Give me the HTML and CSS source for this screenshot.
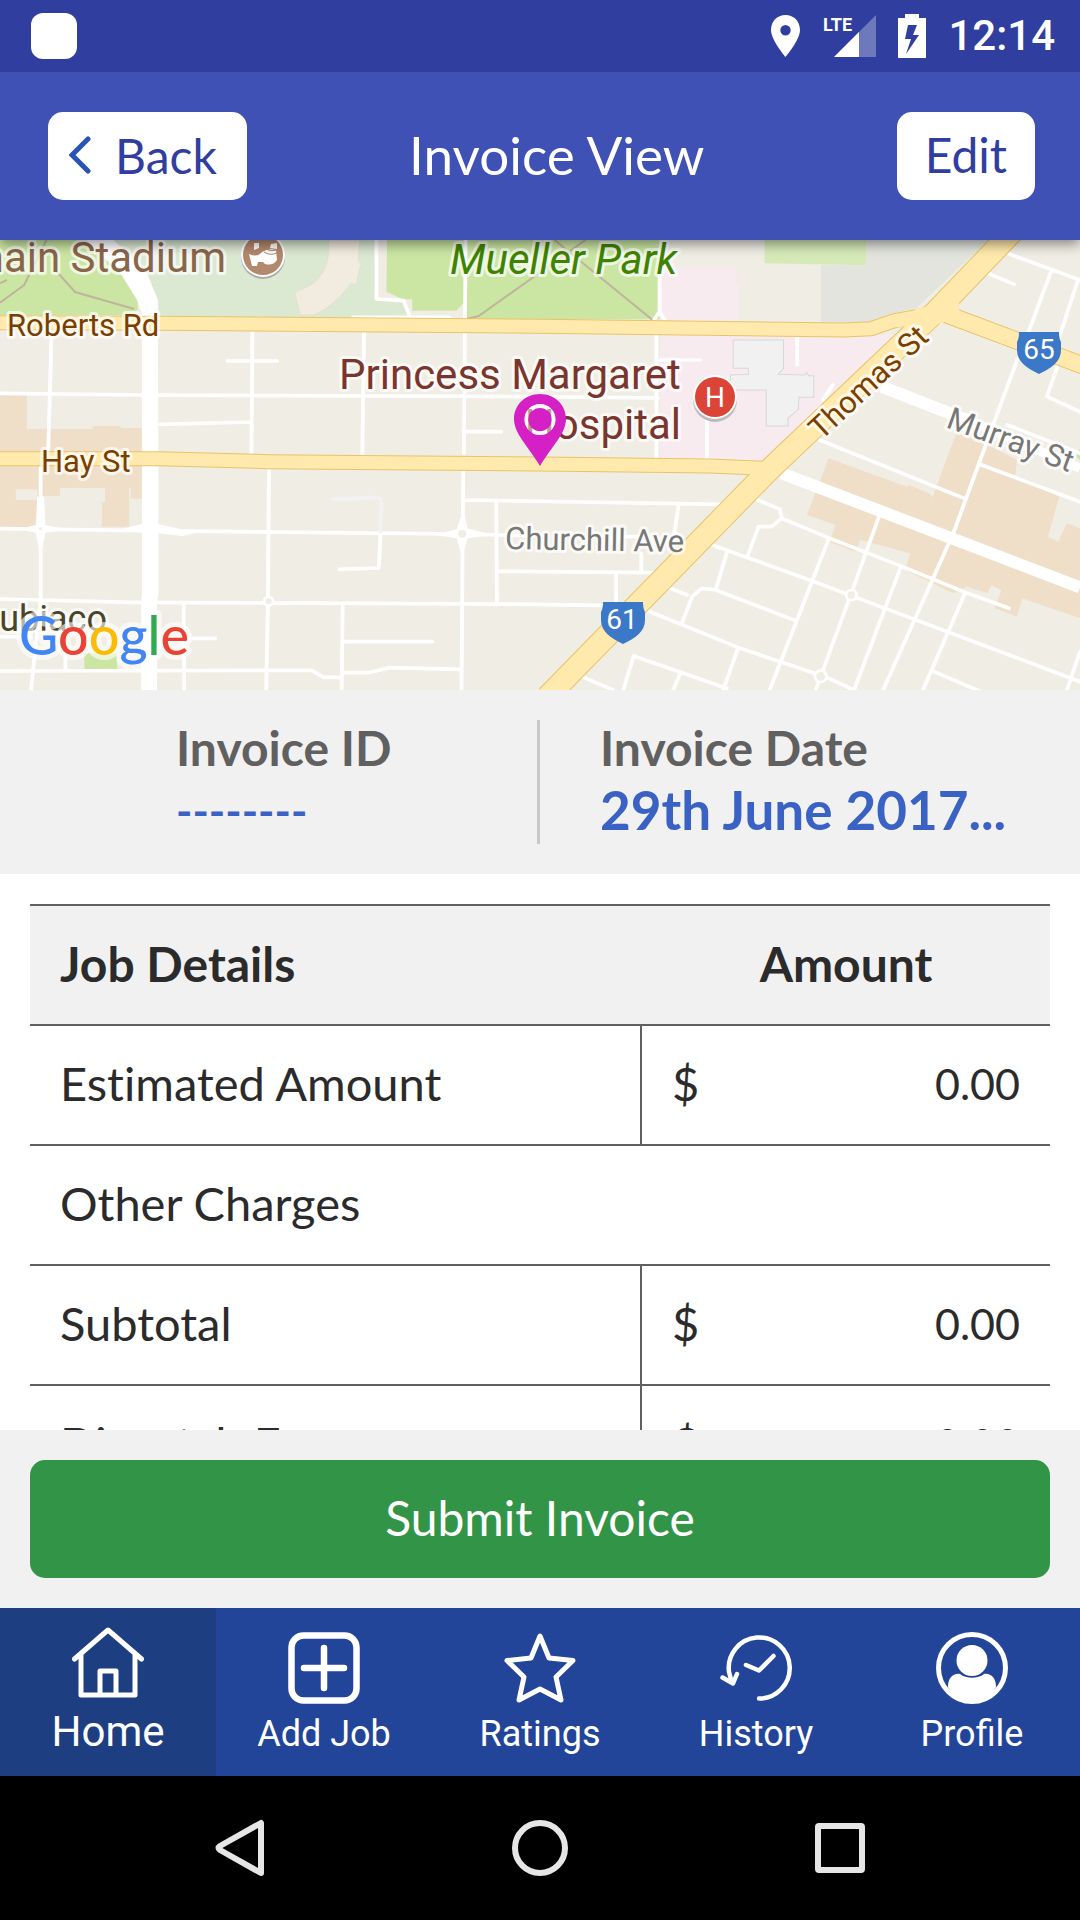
FILE: index.html
```html
<!DOCTYPE html>
<html lang="en">
<head>
<meta charset="utf-8">
<meta name="viewport" content="width=device-width, initial-scale=1">
<title>Invoice View</title>
<link rel="stylesheet" href="styles.css">
</head>
<body>
<div class="app">
  <div class="status">
    <span class="status-app"></span>
    <div class="status-icons">
      <svg width="31" height="44" viewBox="0 0 31 44"><path fill="#fff" fill-rule="evenodd" d="M15.500 1C7 1 1 7.500 1 16c0 10 14.500 27 14.500 27S30 26 30 16C30 7.500 24 1 15.500 1zm0 10a5.200 5.200 0 1 1 0 10.400 5.200 5.200 0 0 1 0-10.400z"/></svg>
      <svg width="53" height="44" viewBox="0 0 53 44"><path fill="#fff" opacity=".3" d="M53 1v42H11z"/><path fill="#fff" d="M36 18v25H11z"/><text class="lte" x="0" y="17">LTE</text></svg>
      <svg width="28" height="44" viewBox="0 0 28 44"><path fill="#fff" fill-rule="evenodd" d="M7 0h14v4h7v40H0V4h7zM10 11 7 25h6L8 40 21 21h-6l4-10z"/></svg>
      <span class="clock">12:14</span>
    </div>
  </div>

  <header class="header">
    <button class="header-btn back" type="button">
      <svg width="22" height="38" viewBox="0 0 22 38"><path d="M19 3 3 19l16 16" fill="none" stroke="#2a53b8" stroke-width="5" stroke-linecap="round"/></svg>
      Back
    </button>
    <h1 class="title">Invoice View</h1>
    <button class="header-btn" type="button">Edit</button>
  </header>

  <svg class="map" viewBox="0 0 1080 450" role="img" aria-label="Map">
    <svg width="1080" height="450" viewBox="0 0 3136 1350" preserveAspectRatio="none">
      <rect width="3136" height="1350" fill="#f0ede5"/>
      <!-- parks and grounds -->
      <path fill="#cbe6a3" d="M0 0H300L400 180V210L380 225H0ZM1124 0H1915V238H1350L1345 190L1325 212H1197V178H1170L1122 155ZM245 1240H340V1290H245ZM3124 650L3136 625V660Z"/>
      <path fill="#dbe8d2" d="M300 0H1090V180L1170 185L1190 235H460V180L420 90Z"/>
      <path fill="#f1ecdf" stroke="#e6dcc8" stroke-width="2" d="M955 0C955 60 950 90 915 125C890 145 870 150 855 158L873 225H910C950 212 990 170 1020 130L1035 135L1045 80H1052L1040 60L1045 0Z"/>
      <path fill="#d6eab8" d="M2220 0H2516V76L2220 70Z"/>
      <path fill="#e2e4dd" d="M2384 76H2516V0H2870L2660 205L2590 220L2530 245L2384 248Z"/>
      <path fill="#f8ebf0" d="M1918 80H2137V130H2146V245H1918ZM1918 285H2600L2215 665L1918 655Z"/>
      <path fill="#f2f1f1" stroke="#d8d8d8" stroke-width="3" d="M2129 300H2275V385L2260 403L2338 405L2343 398L2348 407H2363V472H2320L2318 508L2288 535V558H2225V450H2121V405L2173 403V385H2129Z"/>
      <!-- built-up blocks -->
      <path fill="#f0dfc8" d="M0 465H78V567H270V558H345L355 564H412V776H380V744H375V860H296V786H305V744H174V768H108V748H46V780H108V862H0Z"/>
      <path fill="#f0dfc8" d="M2406 655 2633 740 2638 735 2698 760 2708 772 2758 630 2778 580 2858 610 2953 660 2948 710 3076 770 3043 890 3073 905 3098 850 3136 865V1135L2968 1075 2953 1130 2888 1105 2908 1050 2878 1035 2868 1060 2808 1040 2768 1060 2628 990 2643 940 2498 900 2483 935 2408 905 2426 855 2343 825Z"/>
      <!-- footpaths -->
      <g fill="none" stroke="#bfb59c" stroke-width="6"><path d="M0 188 70 135 135 0M165 95 218 156 390 207M0 130 20 120M1350 238 1390 228 1700 0M1610 0 1895 240"/></g>
      <!-- minor streets -->
      <g fill="none" stroke="#fff" stroke-width="11" stroke-linecap="round" stroke-linejoin="round">
        <path d="M1093 0V177L1172 182 1190 230M1025 232H1305M1352 0 1347 640M1915 90V215L1900 238M1915 215 1930 238"/>
        <path d="M150 270 140 635M0 460 412 465 1568 470 1910 474M733 272 730 645M660 363H805M465 553 730 546M1057 275 1052 645M1345 575H1455M1906 285V655M1915 360H2030M2053 540V655M2315 290V375M2418 435 2390 480"/>
        <path d="M118 680V1080L90 1350M0 866 412 872 1345 882 1570 888M781 690 778 1080 773 1350M1345 690 1340 1350M1345 780 2095 793M1441 785 1443 1085M1450 994 1895 998M0 1077 380 1087 1568 1093 1770 1097M533 1090 535 1350M535 1195H625M995 1098 992 1350M995 1204 1255 1205M0 1293 905 1291 940 1312H990M995 1298H1070L1130 1283 1340 1288M985 988 1100 984 1105 880M190 1250V1290M1970 798 1958 880M1862 940V998M1789 1000V1095M1800 890H1860M0 1190 90 1190"/>
        <path stroke="#f3f2f3" d="M970 778 1090 772Q1110 772 1108 795L1104 875"/>
        <path d="M2925 40 3136 120M2870 100 2945 133M3052 95 2985 280M2955 355 2768 880 2560 1360M3130 120 3070 310M3070 380 3040 470 3136 515M2925 555 3136 640M2380 600 2800 775M2850 675 3136 785"/>
        <path d="M2200 780 2265 808 2270 835 2240 860 2203 860 2170 950M2270 835 2410 895 2620 980 2810 1060 2930 1105M2068 915 2365 1025 2570 1105 3136 1325M1940 1042 1995 1065M1980 1150 2010 1070 2037 1045 2078 1050 2310 1142M2110 940 2078 1050M1875 1110 2150 1225 2395 1310 2480 1350M2405 900 2235 1350M2553 828 2470 1065 2365 1360M2616 980 2480 1350M2802 1060 2680 1350M2705 1292 2860 1360M3136 1235 3098 1350M1690 1310 1780 1350M1810 1350 1840 1248 2110 1345M1975 1300 1955 1350M2143 1225 2100 1350"/>
      </g>
      <g fill="#f0ede5" stroke="#fff" stroke-width="8"><path stroke="none" fill="#fff" d="M108 770 128 770 132 855 200 870 132 878 118 950 104 878 50 868 104 855ZM1345 810 1358 865 1430 885 1358 895 1341 950 1326 895 1260 884 1326 868ZM330 872 412 852H460L570 878 530 888 460 880Z"/><circle cx="118" cy="866" r="9"/><circle cx="1342" cy="881" r="16"/><circle cx="780" cy="1084" r="13"/><circle cx="2472" cy="1065" r="15"/><circle cx="2383" cy="1309" r="17"/></g>
      <!-- wide white roads -->
      <path fill="#fff" d="M250 0H330L427 100 458 180 460 640V1065L456 1085V1350H410V1085L412 1065V220L398 180 350 100Z"/>
      <path fill="none" stroke="#fff" stroke-width="36" d="M2270 700 3136 1042M2560 440 2820 545"/>
      <path fill="none" stroke="#fff" stroke-width="28" d="M2820 545 3136 685"/>
      <!-- main roads: casing, then fill -->
      <g fill="none" stroke-linejoin="round">
        <g stroke="#e8c468"><path stroke-width="45" d="M-10 248 460 250 1568 259 2450 270 2530 266 2598 242 2690 225M-10 656H460L780 665 1568 672 2060 678 2230 685"/><path stroke-width="54" d="M2715 210 3146 377"/><path stroke-width="69" d="M2940-25 2720 212 2233 690 1590 1370"/></g>
        <g stroke="#ffe9ac"><path stroke-width="39" d="M-10 248 460 250 1568 259 2450 270 2530 266 2598 242 2690 225M-10 656H460L780 665 1568 672 2060 678 2230 685"/><path stroke-width="48" d="M2715 210 3146 377"/><path stroke-width="63" d="M2940-25 2720 212 2233 690 1590 1370"/></g>
      </g>
      <path fill="#ffe9ac" d="M2660 207 2785 180V226L2735 250 2600 262Z"/>
    </svg>
    <g class="map-text">
      <text class="place stadium" x="226" y="32" text-anchor="end">Domain Stadium</text>
      <text class="place park" x="450" y="34">Mueller Park</text>
      <text class="place hospital" x="339" y="149">Princess Margaret</text>
      <text class="place hospital" x="681" y="199" text-anchor="end">Hospital</text>
      <text class="road" x="7" y="96">Roberts Rd</text>
      <text class="road" x="41" y="232">Hay St</text>
      <text class="road" transform="translate(821 201) rotate(-43)">Thomas St</text>
      <text class="street" x="505" y="309" transform="rotate(1 505 309)">Churchill Ave</text>
      <text class="street" transform="translate(945 187) rotate(20)">Murray St</text>
      <text class="suburb" x="107" y="391" text-anchor="end">Subiaco</text>
    </g>
    <circle cx="263" cy="17" r="22" fill="#aaa"/><circle cx="263" cy="15" r="22" fill="#fff"/><circle cx="263" cy="15" r="20" fill="#b3896d"/>
    <path fill="#fff" d="M249 14q8 4 13-2 6-4 14-2l1 10q-4 6-12 4l-2-2h-5l-1 4h-5zM254 3h5v5l-5 2zM271 4l6-1v6l-7-1z"/><path stroke="#b3896d" stroke-width="1" fill="none" d="M264 12q6 4 13 1M265 9q6 3 12 1"/>
    <circle cx="715" cy="160" r="22" fill="#bbb"/><circle cx="715" cy="157" r="22" fill="#fff"/><circle cx="715" cy="157" r="20" fill="#db4437"/>
    <text class="badge" x="715" y="167">H</text>
    <g fill="#3b78c8"><path d="M1019 92h40q0 7 2 10v8c0 12-10 18-22 24-12-6-22-12-22-24v-8q2-3 2-10z"/><path d="M603 362h40q0 7 2 10v8c0 12-10 18-22 24-12-6-22-12-22-24v-8q2-3 2-10z"/></g>
    <text class="badge" x="1039" y="119">65</text>
    <text class="badge" x="622" y="389">61</text>
    <path fill="#d420c4" fill-rule="evenodd" d="M540 154c-15 0-26 11-26 25 0 15 15 28 26 47 11-19 26-32 26-47 0-14-11-25-26-25zm0 10a15.500 15.500 0 1 1 0 31 15.500 15.500 0 0 1 0-31z"/>
    <circle cx="540" cy="179.500" r="13.500" fill="none" stroke="#fff" stroke-width="4" opacity=".5"/><circle cx="540" cy="179.500" r="11.500" fill="#d420c4"/>
    <text class="google" x="19" y="415"><tspan fill="#4285f4">G</tspan><tspan fill="#ea4335">o</tspan><tspan fill="#fbbc05">o</tspan><tspan fill="#4285f4">g</tspan><tspan fill="#34a853">l</tspan><tspan fill="#ea4335">e</tspan></text>
  </svg>

  <dl class="summary">
    <div class="summary-item id"><dt>Invoice ID</dt><dd>--------</dd></div>
    <div class="summary-item date"><dt>Invoice Date</dt><dd>29th June 2017...</dd></div>
  </dl>

  <main class="details">
    <table class="charges">
      <thead><tr><th scope="col" class="label">Job Details</th><th scope="col" class="amount-head">Amount</th></tr></thead>
      <tbody>
        <tr><td class="label split">Estimated Amount</td><td><div class="amount"><span>$</span><span class="value">0.00</span></div></td></tr>
        <tr><td class="label" colspan="2">Other Charges</td></tr>
        <tr><td class="label split">Subtotal</td><td><div class="amount"><span>$</span><span class="value">0.00</span></div></td></tr>
        <tr><td class="label split">Dispatch Fee</td><td><div class="amount"><span>$</span><span class="value">0.00</span></div></td></tr>
      </tbody>
    </table>
  </main>

  <div class="submit-bar"><button class="submit" type="button">Submit Invoice</button></div>

  <nav class="tabs">
    <a class="tab active" href="#home"><svg class="icon" viewBox="0 0 72 72"><g fill="none" stroke="#fff" stroke-width="5" stroke-linecap="round" stroke-linejoin="round"><path d="M2.500 33 36 4l33.500 29M9 29v40h54V29M28 67V45h16v22"/></g></svg>Home</a>
    <a class="tab" href="#add"><svg class="icon" viewBox="0 0 72 72"><rect x="3.500" y="3.500" width="65" height="65" rx="12" fill="none" stroke="#fff" stroke-width="6.500"/><path d="M36 16v40M16 36h40" stroke="#fff" stroke-width="6.500" stroke-linecap="round"/></svg>Add Job</a>
    <a class="tab" href="#ratings"><svg class="icon" viewBox="0 0 72 72"><path d="M36 4 45 26 69 28.500 52 45 57 68 36 57 15 68 20 45 3 28.500 27 26Z" fill="none" stroke="#fff" stroke-width="5" stroke-linejoin="round"/></svg>Ratings</a>
    <a class="tab" href="#history"><svg class="icon" viewBox="0 0 72 72"><path d="M39 66.500A30.500 30.500 0 1 0 9 40l3 11M2.500 45.500 13 51.500 17 42M26 33l13 5.500L53.500 24" fill="none" stroke="#fff" stroke-width="4.500" stroke-linecap="round" stroke-linejoin="round"/></svg>History</a>
    <a class="tab" href="#profile"><svg class="icon" viewBox="0 0 72 72"><circle cx="36" cy="36" r="33.500" fill="none" stroke="#fff" stroke-width="5"/><circle cx="36" cy="28.500" r="15.500" fill="#fff"/><path fill="#fff" d="M12 55c0-9 5-14 12-13 6 5 18 5 24 0 7-1 12 4 12 13C54 66 46 70 36 70S18 66 12 55z"/></svg>Profile</a>
  </nav>

  <div class="system-nav">
    <button type="button" aria-label="Back"><svg width="60" height="60" viewBox="0 0 60 60"><path d="M51 5v50L10 32q-3-2 0-4z" fill="none" stroke="#e6e6e6" stroke-width="6" stroke-linejoin="round"/></svg></button>
    <button type="button" aria-label="Home"><svg width="60" height="60" viewBox="0 0 60 60"><circle cx="30" cy="30" r="25" fill="none" stroke="#e6e6e6" stroke-width="6"/></svg></button>
    <button type="button" aria-label="Recent apps"><svg width="60" height="60" viewBox="0 0 60 60"><rect x="8" y="8" width="44" height="44" rx="1" fill="none" stroke="#e6e6e6" stroke-width="6"/></svg></button>
  </div>
</div>
</body>
</html>
```
FILE: styles.css
```css
* { box-sizing: border-box; }

body {
  margin: 0;
  font-family: Lato, sans-serif;
  font-variant-ligatures: none;
  color: #2b2b2b;
  background: #fff;
}

button {
  border: 0;
  font: inherit;
  cursor: pointer;
}

.app {
  display: flex;
  flex-direction: column;
  height: 100vh;
}

.status {
  flex: none;
  position: relative;
  z-index: 2;
  display: flex;
  align-items: center;
  justify-content: space-between;
  height: 72px;
  padding: 0 25px 0 31px;
  background: #303e9f;
}

.status-app {
  width: 46px;
  height: 46px;
  border-radius: 12px;
  background: #fff;
}

.status-icons {
  display: flex;
  align-items: center;
  gap: 22px;
}

.lte {
  font: bold 18px Roboto, sans-serif;
  fill: #fff;
}

.clock {
  font: 500 42px/72px Roboto, sans-serif;
  color: #fff;
}

.header {
  flex: none;
  position: relative;
  z-index: 1;
  display: flex;
  align-items: center;
  height: 168px;
  padding: 0 45px 0 48px;
  background: #3f51b5;
  box-shadow: 0 4px 12px rgba(0, 0, 0, .45);
}

.header-btn {
  height: 88px;
  padding: 0 28px 4px;
  border-radius: 15px;
  background: #fff;
  color: #303e9f;
  font-size: 48px;
}

.back {
  display: flex;
  align-items: center;
  gap: 24px;
  padding: 0 30px 2px 21px;
}

.title {
  flex: 1;
  margin: 0;
  padding: 0 30px 4px 0;
  text-align: center;
  font-size: 53px;
  font-weight: 400;
  color: #fff;
}

.map {
  flex: none;
  display: block;
  width: 100%;
  height: auto;
}

.map-text text {
  font-family: Roboto, sans-serif;
  stroke: rgba(255, 255, 255, .7);
  stroke-width: 6px;
  stroke-linejoin: round;
  paint-order: stroke;
}

.place { font-size: 42px; }
.stadium { fill: #8a6548; }
.park { fill: #3f8300; font-style: italic; }
.hospital { fill: #7a352d; }
.road { font-size: 31px; fill: #7a3f00; }
.street { font-size: 31px; fill: #777; }
.suburb { font-size: 36px; fill: #4a4428; }

.badge {
  font: 28px Roboto, sans-serif;
  fill: #fff;
  text-anchor: middle;
}

.google {
  font: 500 54px Lato, sans-serif;
  stroke: rgba(255, 255, 255, .6);
  stroke-width: 10px;
  stroke-linejoin: round;
  paint-order: stroke;
}

.summary {
  flex: none;
  display: grid;
  grid-template-columns: 1fr 1fr;
  margin: 0;
  padding: 30px 0;
  background: #f1f1f1;
  font-weight: 700;
}

.id { padding-left: 176px; border-right: 3px solid #c8c8c8; }
.date { padding-left: 60px; }

.summary dt {
  font-size: 48px;
  line-height: 56px;
  color: #606060;
}

.summary dd {
  margin: 0;
  font-size: 53px;
  line-height: 68px;
  color: #3a62c4;
}

.summary .id dd { font-size: 44px; }

.details {
  flex: 1;
  min-height: 0;
  overflow: hidden;
  padding: 30px 30px 0;
}

.charges {
  width: 100%;
  table-layout: fixed;
  border-collapse: separate;
  border-spacing: 0;
  border-top: 2px solid #606062;
  font-size: 47px;
}

.charges th,
.charges td {
  height: 120px;
  padding: 0 30px 4px;
  border-bottom: 2px solid #606062;
  text-align: left;
}

.charges th {
  background: #f1f1f1;
  font-size: 48px;
}

.charges th.label { width: 60%; }
.charges .split { border-right: 2px solid #606062; }
.charges .amount-head { text-align: center; }

.amount {
  display: flex;
  justify-content: space-between;
  align-items: center;
}

.value { font-size: 43px; }

.submit-bar {
  flex: none;
  padding: 30px;
  background: #f1f1f1;
}

.submit {
  display: block;
  width: 100%;
  height: 118px;
  padding: 0 0 4px;
  border-radius: 15px;
  background: #329446;
  color: #fff;
  font-size: 48px;
}

.tabs {
  flex: none;
  display: grid;
  grid-template-columns: repeat(5, 1fr);
  height: 168px;
  background: #224599;
}

.tab {
  display: flex;
  flex-direction: column;
  align-items: center;
  gap: 6px;
  padding-top: 24px;
  font: 36px/48px Roboto, sans-serif;
  color: #fff;
  text-decoration: none;
}

.tab.active {
  gap: 10px;
  padding-top: 18px;
  font-size: 42px;
  background: #1e3e82;
}

.icon {
  width: 72px;
  height: 72px;
}

.system-nav {
  flex: none;
  display: grid;
  grid-template-columns: repeat(3, 1fr);
  height: 144px;
  padding: 0 90px;
  background: #000;
}

.system-nav button {
  display: grid;
  place-items: center;
  background: none;
}
```
